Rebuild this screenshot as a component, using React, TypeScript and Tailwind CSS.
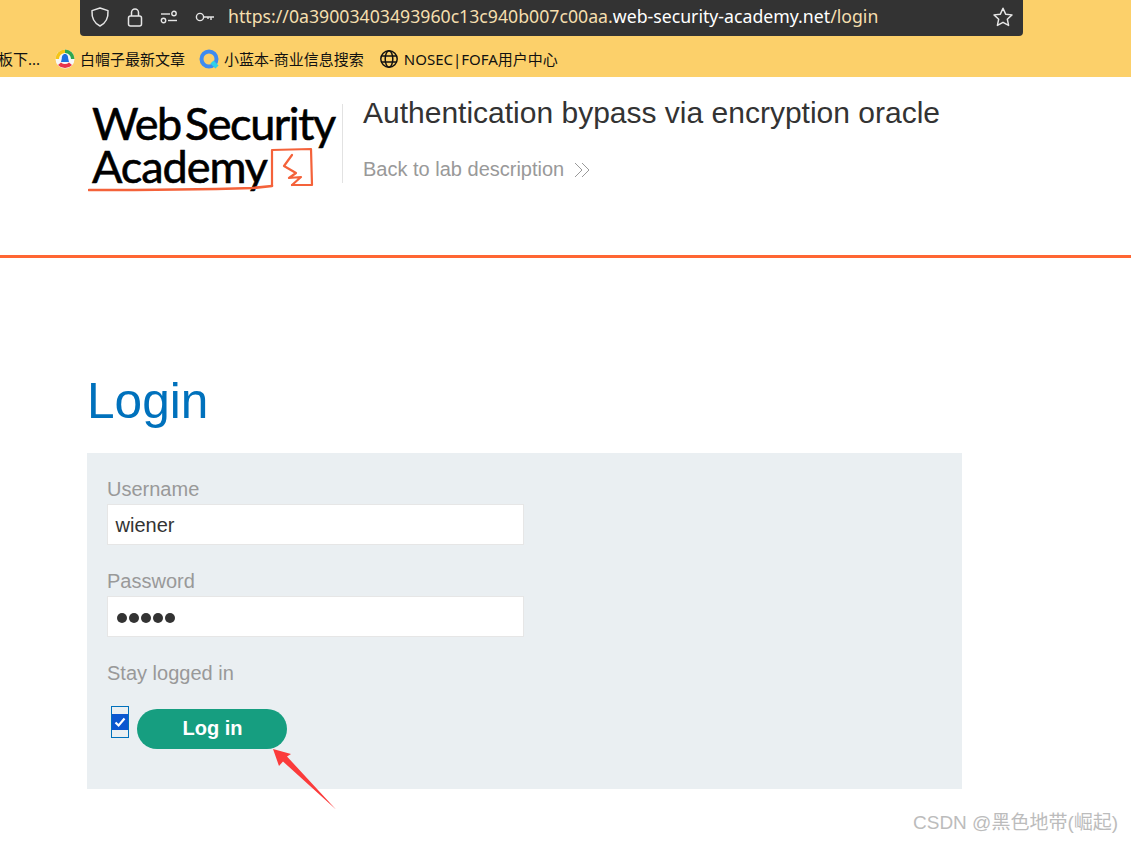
import React from "react";

const cjk = "font-['Noto_Sans','Noto_Sans_CJK_SC',sans-serif]";

function UrlBar() {
  return (
    <div className="ml-[80px] flex h-[36px] w-[943px] items-center rounded-b-[4px] bg-[#333333] pb-[2px] pl-[10px] pr-[9px] text-[#e8e8e8]">
      <svg width="20" height="22" viewBox="0 0 20 22" fill="none" stroke="#e6e6e6" strokeWidth="1.5" className="mr-[17px]">
        <path d="M10 2 L18 4.6 C18.4 11 16.5 16.8 10 20 C3.5 16.8 1.6 11 2 4.6 Z" strokeLinejoin="round" />
      </svg>
      <svg width="16" height="20" viewBox="0 0 16 20" fill="none" stroke="#e6e6e6" strokeWidth="1.5" className="mr-[17px]">
        <rect x="1.5" y="9" width="13" height="10" rx="2" />
        <path d="M4.5 9 V5.5 A3.5 3.5 0 0 1 11.5 5.5 V9" />
      </svg>
      <svg width="18" height="14" viewBox="0 0 18 14" fill="none" stroke="#e6e6e6" strokeWidth="1.4" className="mr-[17px]">
        <path d="M1 4 H10" />
        <circle cx="14" cy="3.5" r="2.2" />
        <circle cx="3.5" cy="10.5" r="2.2" />
        <path d="M8 10.5 H17" />
      </svg>
      <svg width="20" height="12" viewBox="0 0 20 12" fill="none" stroke="#e6e6e6" strokeWidth="1.4" className="mr-[13px]">
        <circle cx="5" cy="6" r="3.6" />
        <path d="M9 6 H19 M16 6 V9 M13 6 V8" />
      </svg>
      <div className="flex-1 whitespace-nowrap font-['Noto_Sans',sans-serif] text-[17.7px] leading-none">
        <span className="text-[#f5dfae]">https://0a39003403493960c13c940b007c00aa.</span>
        <span className="text-white">web-security-academy.net</span>
        <span className="text-[#f5dfae]">/login</span>
      </div>
      <svg width="22" height="22" viewBox="0 0 24 24" fill="none" stroke="#e6e6e6" strokeWidth="1.6" strokeLinejoin="round">
        <path d="M12 2.5 L14.9 8.9 L21.8 9.7 L16.7 14.4 L18.1 21.2 L12 17.8 L5.9 21.2 L7.3 14.4 L2.2 9.7 L9.1 8.9 Z" />
      </svg>
    </div>
  );
}

function Bookmark({ icon, label, cls }: { icon: React.ReactNode; label: string; cls: string }) {
  return (
    <div className={`flex items-center ${cls}`}>
      {icon}
      <span>{label}</span>
    </div>
  );
}

function BookmarkBar() {
  return (
    <div className={`ml-[-2px] flex h-[41px] items-center whitespace-nowrap pt-[5px] text-[15px] text-[#111111] ${cjk}`}>
      <span className="w-[57px]">板下...</span>
      <Bookmark
        cls="mr-[14px] gap-[5px]"
        label="白帽子最新文章"
        icon={
          <svg width="20" height="20" viewBox="0 0 20 20">
            <circle cx="10" cy="10" r="9.5" fill="#f7f7f7" />
            <path d="M10 .5 A9.5 9.5 0 0 1 19.5 10 L16 10 A6 6 0 0 0 10 4 Z" fill="#2fa84f" />
            <path d="M.5 10 A9.5 9.5 0 0 1 10 .5 L10 4 A6 6 0 0 0 4 10 Z" fill="#f5c518" />
            <path d="M3 16 A9.5 9.5 0 0 0 17 16 L14 13.5 A6 6 0 0 1 6 13.5 Z" fill="#e8344a" />
            <path d="M10 5 C12.5 5 13.2 7.5 13.2 9.5 L14 13 L6 13 L6.8 9.5 C6.8 7.5 7.5 5 10 5 Z" fill="#1d6fe0" />
          </svg>
        }
      />
      <Bookmark
        cls="mr-[15px] gap-[4px]"
        label="小蓝本-商业信息搜索"
        icon={
          <svg width="21" height="21" viewBox="0 0 21 21" fill="none">
            <circle cx="10" cy="10" r="7.5" stroke="#3d8bf0" strokeWidth="4" />
            <path d="M13 13 L18 18" stroke="#2fd0e8" strokeWidth="4.5" />
          </svg>
        }
      />
      <Bookmark
        cls="gap-[5px]"
        label="NOSEC|FOFA用户中心"
        icon={
          <svg width="20" height="20" viewBox="0 0 20 20" fill="none" stroke="#111111" strokeWidth="1.5">
            <circle cx="10" cy="10" r="8.2" />
            <ellipse cx="10" cy="10" rx="3.8" ry="8.2" />
            <path d="M2 7 H18 M2 13 H18" />
          </svg>
        }
      />
    </div>
  );
}

function Logo() {
  return (
    <div className="relative ml-[1px] mr-[-1px] h-[90px] w-[255px] font-['Lato',sans-serif] text-black [-webkit-text-stroke:0.6px_black]">
      <div className="mt-[-2px] text-[45px] leading-[43px] tracking-[-1.4px] whitespace-nowrap">
        Web<span className="ml-[4px]">Security</span>
      </div>
      <div className="text-[45px] leading-[43px] tracking-[-1.05px] whitespace-nowrap">Academy</div>
      <svg
        width="240"
        height="50"
        viewBox="0 0 240 50"
        fill="none"
        stroke="#f4623a"
        strokeLinejoin="round"
        strokeLinecap="round"
        className="absolute left-[-4px] top-[41px] [-webkit-text-stroke:0]"
      >
        <path d="M1 45 C60 45 130 44 165 43 L184 41" strokeWidth="2.6" />
        <path d="M184 41 L184 5 L223 4 L224 40 L204 40" strokeWidth="2.2" />
        <path d="M204 10 L196 21 L208 28 L201 33 L213 32 L204 40" strokeWidth="2.2" />
      </svg>
    </div>
  );
}

function Field({ label, children, mb }: { label: string; children: React.ReactNode; mb: string }) {
  return (
    <div className={mb}>
      <div className="mb-[3px] h-[23px] text-[20px] leading-[23px] text-[#999999]">{label}</div>
      <div className="flex h-[41px] w-[417px] items-center border border-[#e6e6e6] bg-white px-[7.5px] text-[20px] text-[#333333]">
        {children}
      </div>
    </div>
  );
}

export default function App() {
  return (
    <div className="relative h-[843px] w-[1131px] overflow-hidden bg-white font-['Liberation_Sans',sans-serif]">
      <div className="h-[77px] bg-[#fcd06a]">
        <UrlBar />
        <BookmarkBar />
      </div>

      <header className="flex h-[181px] border-b-[3px] border-[#ff6633] pl-[91px] pt-[27px]">
        <Logo />
        <div className="ml-[-4px] flex h-[79px] flex-col border-l border-[#e2e2e2] pl-[20px]">
          <div className="mt-[-9px] text-[30px] leading-[36px] whitespace-nowrap text-[#333333]">
            Authentication bypass via encryption oracle
          </div>
          <div className="mt-[27px] flex items-center gap-[10px] text-[20px] leading-[23px] text-[#999999]">
            <span>Back to lab description</span>
            <svg width="17" height="16" viewBox="0 0 17 16" fill="none" stroke="#999999" strokeWidth="1">
              <path d="M1 1 L8 8 L1 15 M8 1 L15 8 L8 15" />
            </svg>
          </div>
        </div>
      </header>

      <main className="pl-[87px]">
        <h1 className="mt-[115px] h-[56px] text-[49.6px] leading-[56px] font-normal text-[#0071bc]">Login</h1>
        <section className="mt-[24px] h-[336px] w-[875px] bg-[#eaeff2] pl-[20px] pt-[25px]">
          <Field label="Username" mb="mb-[25px]">
            wiener
          </Field>
          <Field label="Password" mb="mb-[25px]">
            <span className="ml-[1px] mt-[2px] flex gap-[2px]">
              {[0, 1, 2, 3, 4].map((i) => (
                <span key={i} className="h-[10px] w-[10px] rounded-full bg-[#333333]" />
              ))}
            </span>
          </Field>
          <div className="h-[23px] text-[20px] leading-[23px] text-[#999999]">Stay logged in</div>
          <div className="mt-[21px] flex items-start pl-[4px]">
            <div className="flex h-[32px] w-[18px] items-center justify-center border border-[#0071bc]">
              <div className="flex h-[16px] w-[16px] items-center justify-center bg-[#0b57d0]">
                <svg width="12" height="12" viewBox="0 0 12 12" fill="none" stroke="white" strokeWidth="2.2">
                  <path d="M1.5 6.5 L4.6 9.5 L10.5 2.5" />
                </svg>
              </div>
            </div>
            <button className="ml-[8px] mt-[3px] h-[40px] w-[150px] rounded-[20px] bg-[#169e80] pb-[2px] pl-[1px] text-[20px] font-bold text-white">
              Log in
            </button>
          </div>
        </section>
      </main>

      <svg width="70" height="70" viewBox="0 0 70 70" className="absolute left-[272px] top-[746px]">
        <path d="M1 3 L19 8 L15 10.5 L64 63.5 L11 15.5 L7 20 Z" fill="#fb3b3b" />
      </svg>
      <div className="absolute left-[913px] top-[811px] whitespace-nowrap font-['Liberation_Sans','Noto_Sans_CJK_SC',sans-serif] text-[19px] leading-[24px] text-[#bcbcbc]">
        CSDN @黑色地带(崛起)
      </div>
    </div>
  );
}
